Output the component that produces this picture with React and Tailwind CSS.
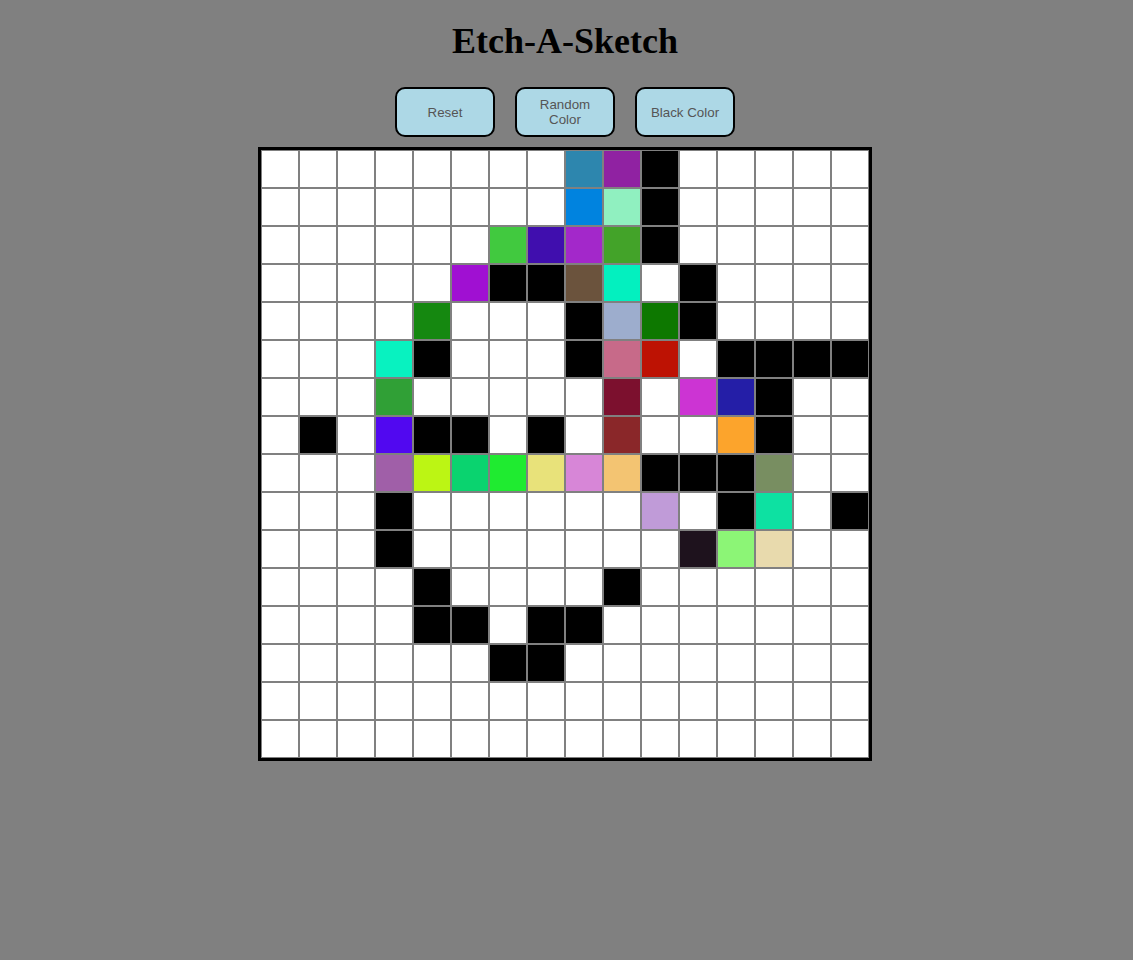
const COLORS = {
  '0,8': '#2d86ae', '0,9': '#9022a2', '0,10': '#000',
  '1,8': '#0083df', '1,9': '#90f0c0', '1,10': '#000',
  '2,6': '#41c93f', '2,7': '#400eae', '2,8': '#a328ca', '2,9': '#43a329', '2,10': '#000',
  '3,5': '#a010d2', '3,6': '#000', '3,7': '#000', '3,8': '#6b533d', '3,9': '#03f0bf', '3,11': '#000',
  '4,4': '#158810', '4,8': '#000', '4,9': '#9dadcd', '4,10': '#0d7800', '4,11': '#000',
  '5,3': '#08f2c0', '5,4': '#000', '5,8': '#000', '5,9': '#c76a89', '5,10': '#bd1203',
  '5,12': '#000', '5,13': '#000', '5,14': '#000', '5,15': '#000',
  '6,3': '#30a036', '6,9': '#7c102e', '6,11': '#cc34d3', '6,12': '#241ea7', '6,13': '#000',
  '7,1': '#000', '7,3': '#5108f0', '7,4': '#000', '7,5': '#000', '7,7': '#000', '7,9': '#8a2729',
  '7,12': '#fca42c', '7,13': '#000',
  '8,3': '#a05fa8', '8,4': '#bcf514', '8,5': '#0ad36f', '8,6': '#1feb30', '8,7': '#e8e27a',
  '8,8': '#d786d7', '8,9': '#f3c472', '8,10': '#000', '8,11': '#000', '8,12': '#000', '8,13': '#788e61',
  '9,3': '#000', '9,10': '#c09bd8', '9,12': '#000', '9,13': '#0de1a2', '9,15': '#000',
  '10,3': '#000', '10,11': '#1e121d', '10,12': '#8cf576', '10,13': '#e8daad',
  '11,4': '#000', '11,9': '#000',
  '12,4': '#000', '12,5': '#000', '12,7': '#000', '12,8': '#000',
  '13,6': '#000', '13,7': '#000',
};

function Cell({ row, col }) {
  const color = COLORS[`${row},${col}`] || '#ffffff';
  return <div className="w-[38px] h-[38px] border border-[#808080]" style={{ backgroundColor: color }} />;
}

export default function App() {
  const rows = Array.from({ length: 16 }, (_, i) => i);

  return (
    <div className="min-h-[960px] bg-[#808080] flex flex-col items-center pt-[21px] pr-[3px]">
      <h1 className="text-[36px] leading-[41px] font-bold text-black font-['Liberation_Serif',serif]">
        Etch-A-Sketch
      </h1>

      <div className="flex gap-[20px] mt-[25px]">
        {['Reset', 'Random Color', 'Black Color'].map((label) => (
          <button
            key={label}
            className="w-[100px] h-[50px] px-[6px] bg-[#add8e6] border-2 border-black rounded-[10px] text-[13.333px] leading-[15px] text-[#555] font-['Liberation_Sans',Arial,sans-serif]"
          >
            {label}
          </button>
        ))}
      </div>

      {/* grid 16x16 */}
      <div className="mt-[10px] border-[3px] border-black grid grid-cols-[repeat(16,38px)]">
        {rows.map((r) => rows.map((c) => <Cell key={`${r}-${c}`} row={r} col={c} />))}
      </div>
    </div>
  );
}
